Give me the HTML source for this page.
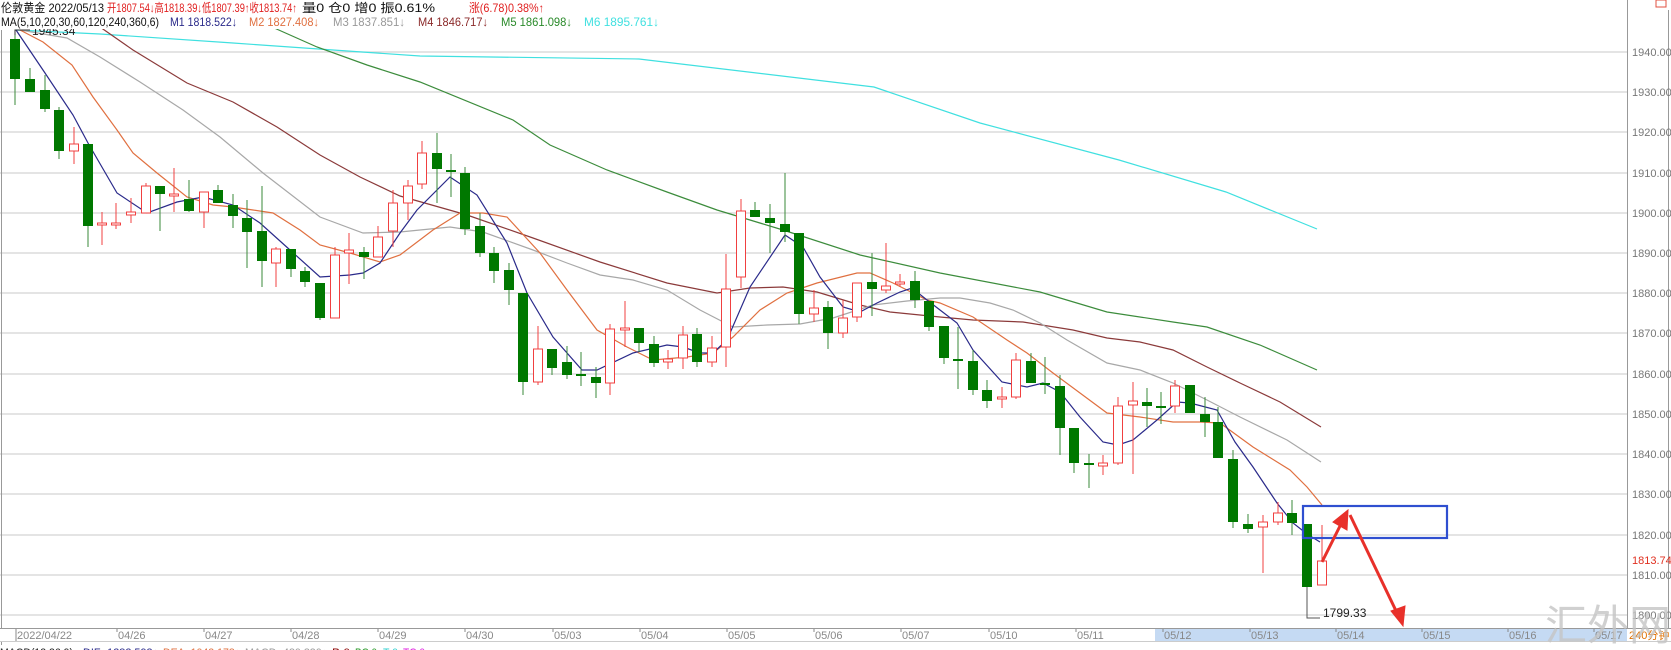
<!DOCTYPE html>
<html><head><meta charset="utf-8"><style>
html,body{margin:0;padding:0;background:#fff;width:1671px;height:650px;overflow:hidden}
svg{display:block}
text{font-family:"Liberation Sans","Noto Sans CJK SC",sans-serif}
</style></head><body>
<svg width="1671" height="650" viewBox="0 0 1671 650" xmlns="http://www.w3.org/2000/svg">
<rect width="1671" height="650" fill="#fff"/>
<g stroke="#d4d4d4" stroke-width="1.2">
<line x1="0" y1="52" x2="1627" y2="52"/><line x1="0" y1="92" x2="1627" y2="92"/><line x1="0" y1="132" x2="1627" y2="132"/><line x1="0" y1="173" x2="1627" y2="173"/><line x1="0" y1="213" x2="1627" y2="213"/><line x1="0" y1="253" x2="1627" y2="253"/><line x1="0" y1="293" x2="1627" y2="293"/><line x1="0" y1="333" x2="1627" y2="333"/><line x1="0" y1="374" x2="1627" y2="374"/><line x1="0" y1="414" x2="1627" y2="414"/><line x1="0" y1="454" x2="1627" y2="454"/><line x1="0" y1="494" x2="1627" y2="494"/><line x1="0" y1="535" x2="1627" y2="535"/><line x1="0" y1="575" x2="1627" y2="575"/><line x1="0" y1="615" x2="1627" y2="615"/>
</g>
<line x1="1.5" y1="30" x2="1.5" y2="645" stroke="#999"/>
<line x1="1627.5" y1="0" x2="1627.5" y2="628" stroke="#999"/>
<line x1="1668.5" y1="10" x2="1668.5" y2="628" stroke="#999"/>
<rect x="1656" y="0" width="10" height="7" fill="none" stroke="#e05040"/>
<g fill="#777" font-size="11">
<text x="1632" y="56">1940.00</text><text x="1632" y="96">1930.00</text><text x="1632" y="136">1920.00</text><text x="1632" y="177">1910.00</text><text x="1632" y="217">1900.00</text><text x="1632" y="257">1890.00</text><text x="1632" y="297">1880.00</text><text x="1632" y="337">1870.00</text><text x="1632" y="378">1860.00</text><text x="1632" y="418">1850.00</text><text x="1632" y="458">1840.00</text><text x="1632" y="498">1830.00</text><text x="1632" y="539">1820.00</text><text x="1632" y="579">1810.00</text><text x="1632" y="619">1800.00</text>
</g>
<text x="1632" y="564" fill="#e03020" font-size="11">1813.74</text>

<g fill="none" stroke-width="1.2">
<polyline stroke="#40e0e0" points="16,30 100,34 233,43 333,50 420,56 639,59 874,87 980,123 1119,160 1226,192 1317,229"/>
<polyline stroke="#3c8c3c" points="272,27 317,47 367,65 420,82 513,120 550,145 607,170 667,192 717,210 783,230 860,255 940,273 1040,292 1107,312 1173,322 1207,327 1260,345 1317,370"/>
<polyline stroke="#8b3a3a" points="100,27 133,50 187,83 233,102 277,127 320,155 360,177 400,196 467,215 533,238 600,262 667,283 717,293 750,288 783,287 817,292 860,305 890,312 940,317 973,320 1023,322 1073,330 1107,338 1140,342 1173,350 1207,367 1240,383 1280,402 1321,427"/>
<polyline stroke="#a8a8a8" points="20,30 67,38 100,57 140,82 183,110 220,137 263,173 320,217 363,233 400,232 450,227 483,232 533,250 567,263 600,275 633,280 667,290 700,310 733,327 767,325 800,324 833,318 873,305 907,301 940,298 960,298 990,303 1013,310 1040,323 1067,340 1107,363 1140,370 1173,383 1207,400 1240,417 1287,440 1321,462"/>
<polyline stroke="#e07040" points="20,30 43,42 72,65 93,97 117,130 133,153 157,173 187,197 213,205 233,207 253,210 273,213 300,230 320,245 350,253 380,262 400,255 433,230 460,213 483,213 507,217 540,253 567,290 597,330 627,347 653,360 687,357 713,353 733,337 760,310 787,293 817,283 857,273 870,273 893,283 927,300 940,303 973,317 1007,340 1027,353 1053,373 1080,393 1107,413 1140,417 1173,422 1200,422 1220,423 1253,447 1290,470 1307,487 1322,505"/>
<polyline stroke="#2a2a8a" points="16,30 45,73 73,115 88,143 117,193 147,213 177,202 203,197 233,205 260,223 290,250 320,277 350,275 363,273 380,263 400,233 417,210 450,177 477,195 507,243 527,293 553,337 582,370 597,370 633,353 667,345 683,347 700,353 713,353 727,340 750,287 785,235 803,247 820,277 843,307 860,312 877,303 900,292 912,288 927,300 940,310 957,323 973,350 1002,382 1027,387 1043,383 1060,392 1080,417 1103,442 1118,445 1133,440 1157,420 1177,402 1190,403 1217,410 1235,442 1253,467 1277,503 1293,523 1307,534 1320,542"/>
</g>

<g id="candles"></g>

<polyline points="15,35 15,30 30,30" fill="none" stroke="#333" stroke-width="1"/>
<text x="32" y="35" font-size="12" fill="#222">1945.34</text>
<polyline points="1307,587 1307,618 1320,618" fill="none" stroke="#555" stroke-width="1"/>
<text x="1323" y="617" font-size="12" fill="#222">1799.33</text>

<rect x="1303" y="506" width="144" height="32" fill="none" stroke="#2f4fd0" stroke-width="2.2"/>
<g stroke="#e8302a" stroke-width="3" fill="#e8302a">
<line x1="1322" y1="562" x2="1342" y2="522"/>
<polygon points="1348,510 1347,530 1333,522" stroke-width="1"/>
<line x1="1350" y1="515" x2="1398" y2="615"/>
<polygon points="1403,626 1391,611 1405,606" stroke-width="1"/>
</g>

<rect x="0" y="628" width="1671" height="13" fill="#fff"/>
<rect x="1155" y="629" width="472" height="12" fill="#c5daf3"/>
<line x1="0" y1="628.5" x2="1671" y2="628.5" stroke="#999"/>
<line x1="0" y1="641.5" x2="1671" y2="641.5" stroke="#ccc"/>
<g fill="#888" font-size="11">
<text x="17" y="639">2022/04/22</text>
<text x="118" y="639">04/26</text><text x="205" y="639">04/27</text><text x="292" y="639">04/28</text><text x="379" y="639">04/29</text><text x="466" y="639">04/30</text><text x="554" y="639">05/03</text><text x="641" y="639">05/04</text><text x="728" y="639">05/05</text><text x="815" y="639">05/06</text><text x="902" y="639">05/07</text><text x="990" y="639">05/10</text><text x="1077" y="639">05/11</text><text x="1164" y="639">05/12</text><text x="1251" y="639">05/13</text><text x="1337" y="639">05/14</text><text x="1423" y="639">05/15</text><text x="1509" y="639">05/16</text><text x="1595" y="639">05/17</text>
</g>
<g stroke="#888">
<line x1="16" y1="629" x2="16" y2="641"/><line x1="117" y1="629" x2="117" y2="632"/><line x1="204" y1="629" x2="204" y2="632"/><line x1="291" y1="629" x2="291" y2="632"/><line x1="378" y1="629" x2="378" y2="632"/><line x1="465" y1="629" x2="465" y2="632"/><line x1="553" y1="629" x2="553" y2="632"/><line x1="640" y1="629" x2="640" y2="632"/><line x1="727" y1="629" x2="727" y2="632"/><line x1="814" y1="629" x2="814" y2="632"/><line x1="901" y1="629" x2="901" y2="632"/><line x1="989" y1="629" x2="989" y2="632"/><line x1="1076" y1="629" x2="1076" y2="632"/><line x1="1163" y1="629" x2="1163" y2="632"/><line x1="1250" y1="629" x2="1250" y2="632"/><line x1="1336" y1="629" x2="1336" y2="632"/><line x1="1422" y1="629" x2="1422" y2="632"/><line x1="1508" y1="629" x2="1508" y2="632"/><line x1="1594" y1="629" x2="1594" y2="632"/>
</g>
<text x="1629" y="639" font-size="11" fill="#e07000">240分钟</text>
<text x="1545" y="640" font-size="42" fill="#c4c4c4" fill-opacity="0.8" font-family="'Noto Serif CJK SC',serif">汇外网</text>

<g font-size="11" lengthAdjust="spacingAndGlyphs">
<text x="0" y="656" fill="#222" textLength="73" lengthAdjust="spacingAndGlyphs">MACD(12,26,9)</text>
<text x="83" y="656" fill="#2a2a8a" textLength="75" lengthAdjust="spacingAndGlyphs">DIF -1282.593↓</text>
<text x="163" y="656" fill="#e07040" textLength="77" lengthAdjust="spacingAndGlyphs">DEA -1042.178↓</text>
<text x="245" y="656" fill="#999" textLength="82" lengthAdjust="spacingAndGlyphs">MACD -480.830↑</text>
<text x="332" y="656" fill="#8b0000" textLength="18" lengthAdjust="spacingAndGlyphs">B 0</text>
<text x="355" y="656" fill="#2a9a2a" textLength="22" lengthAdjust="spacingAndGlyphs">BC 0</text>
<text x="383" y="656" fill="#30d0d0" textLength="15" lengthAdjust="spacingAndGlyphs">T 0</text>
<text x="403" y="656" fill="#e020e0" textLength="22" lengthAdjust="spacingAndGlyphs">TC 0</text>
</g>

<rect x="0" y="0" width="665" height="29" fill="#fff"/>
<g font-size="12">
<text x="1" y="12" fill="#111" textLength="103" lengthAdjust="spacingAndGlyphs">伦敦黄金 2022/05/13</text>
<text x="107" y="12" fill="#e02020" textLength="190" lengthAdjust="spacingAndGlyphs">开1807.54↓高1818.39↓低1807.39↑收1813.74↑</text>
<text x="302" y="12" fill="#111" textLength="133" lengthAdjust="spacingAndGlyphs">量0  仓0 增0 振0.61%</text>
<text x="469" y="12" fill="#e02020" textLength="75" lengthAdjust="spacingAndGlyphs">涨(6.78)0.38%↑</text>
<text x="1" y="26" fill="#111" textLength="158" lengthAdjust="spacingAndGlyphs">MA(5,10,20,30,60,120,240,360,6)</text>
<text x="170" y="26" fill="#2a2a8a" textLength="67" lengthAdjust="spacingAndGlyphs">M1 1818.522↓</text>
<text x="249" y="26" fill="#e07040" textLength="70" lengthAdjust="spacingAndGlyphs">M2 1827.408↓</text>
<text x="333" y="26" fill="#999" textLength="72" lengthAdjust="spacingAndGlyphs">M3 1837.851↓</text>
<text x="418" y="26" fill="#8b2a2a" textLength="70" lengthAdjust="spacingAndGlyphs">M4 1846.717↓</text>
<text x="501" y="26" fill="#2a8a2a" textLength="71" lengthAdjust="spacingAndGlyphs">M5 1861.098↓</text>
<text x="584" y="26" fill="#40e0e0" textLength="75" lengthAdjust="spacingAndGlyphs">M6 1895.761↓</text>
</g>
</svg>
<script>
var d=[[15,39,79,30,105,'g'],[30,79,92,68,92,'g'],[45,90,109,75,112,'g'],[59,110,151,107,159,'g'],[74,144,151,127,164,'r'],[88,144,226,144,247,'g'],[102,223,225,212,245,'r'],[116,223,224,203,229,'r'],[131,212,215,198,223,'r'],[146,186,213,183,213,'r'],[160,186,194,186,231,'g'],[174,194,195,168,212,'r'],[189,199,211,180,212,'g'],[204,192,212,192,228,'r'],[218,190,203,185,203,'g'],[233,205,216,194,228,'g'],[247,218,232,200,268,'g'],[262,231,261,186,287,'g'],[276,249,263,247,287,'r'],[291,249,269,249,277,'g'],[305,271,282,267,287,'g'],[320,283,318,283,320,'g'],[335,255,318,247,318,'r'],[349,250,253,233,284,'r'],[364,252,257,247,279,'g'],[378,237,257,226,257,'r'],[393,203,231,190,247,'r'],[408,186,203,180,220,'r'],[422,153,184,141,189,'r'],[437,153,169,133,203,'g'],[451,170,172,154,197,'g'],[465,173,229,167,235,'g'],[480,226,253,213,257,'g'],[494,253,271,247,283,'g'],[509,270,290,263,305,'g'],[523,293,382,293,395,'g'],[538,349,382,326,385,'r'],[552,349,368,349,375,'g'],[567,362,375,346,379,'g'],[581,374,376,352,386,'g'],[596,377,383,367,398,'g'],[610,329,383,324,395,'r'],[625,328,330,301,347,'r'],[639,328,343,328,352,'g'],[654,344,363,336,367,'g'],[668,359,362,350,369,'r'],[683,335,358,326,369,'r'],[697,334,362,328,367,'g'],[712,348,362,336,367,'r'],[726,289,347,254,367,'r'],[741,211,277,199,288,'r'],[755,210,217,202,217,'g'],[770,218,223,204,253,'g'],[785,224,232,173,242,'g'],[799,233,314,233,324,'g'],[814,308,314,290,322,'r'],[828,307,333,301,349,'g'],[843,318,333,300,338,'r'],[857,283,317,283,322,'r'],[872,282,289,253,316,'g'],[886,286,290,243,293,'r'],[900,282,284,274,287,'r'],[915,281,300,271,308,'g'],[929,301,327,301,331,'g'],[944,326,358,326,364,'g'],[958,359,360,327,389,'g'],[973,361,390,350,395,'g'],[987,390,401,380,408,'g'],[1002,397,399,387,408,'r'],[1016,360,397,353,399,'r'],[1031,361,383,353,383,'g'],[1045,383,385,357,394,'g'],[1060,386,428,375,455,'g'],[1074,428,463,428,473,'g'],[1089,463,465,454,488,'g'],[1103,463,466,455,475,'r'],[1118,406,463,397,465,'r'],[1133,401,405,382,474,'r'],[1147,402,406,388,427,'g'],[1161,406,407,392,424,'g'],[1175,386,406,380,413,'r'],[1190,385,413,385,413,'g'],[1205,414,422,397,437,'g'],[1218,422,458,407,458,'g'],[1233,459,522,450,528,'g'],[1248,524,529,514,533,'g'],[1263,522,527,515,573,'r'],[1278,513,522,502,525,'r'],[1292,513,523,500,535,'g'],[1307,524,587,524,587,'g'],[1322,561,585,525,585,'r']];
var g=document.getElementById('candles'),s='';
d.forEach(function(c){var x=c[0],t=c[1],b=c[2],h=c[3],l=c[4];if(b-t<2)b=t+2;
if(c[5]=='g'){s+='<line x1="'+x+'" y1="'+h+'" x2="'+x+'" y2="'+l+'" stroke="#3a8a3a" stroke-width="1"/><rect x="'+(x-5)+'" y="'+t+'" width="10" height="'+(b-t)+'" fill="#007800"/>';}
else{s+='<line x1="'+x+'" y1="'+h+'" x2="'+x+'" y2="'+t+'" stroke="#f04040" stroke-width="1"/><line x1="'+x+'" y1="'+b+'" x2="'+x+'" y2="'+l+'" stroke="#f04040" stroke-width="1"/><rect x="'+(x-4.5)+'" y="'+t+'" width="9" height="'+(b-t)+'" fill="#fff" stroke="#f04040" stroke-width="1"/>';}});
g.innerHTML=s;
</script>
</body></html>
